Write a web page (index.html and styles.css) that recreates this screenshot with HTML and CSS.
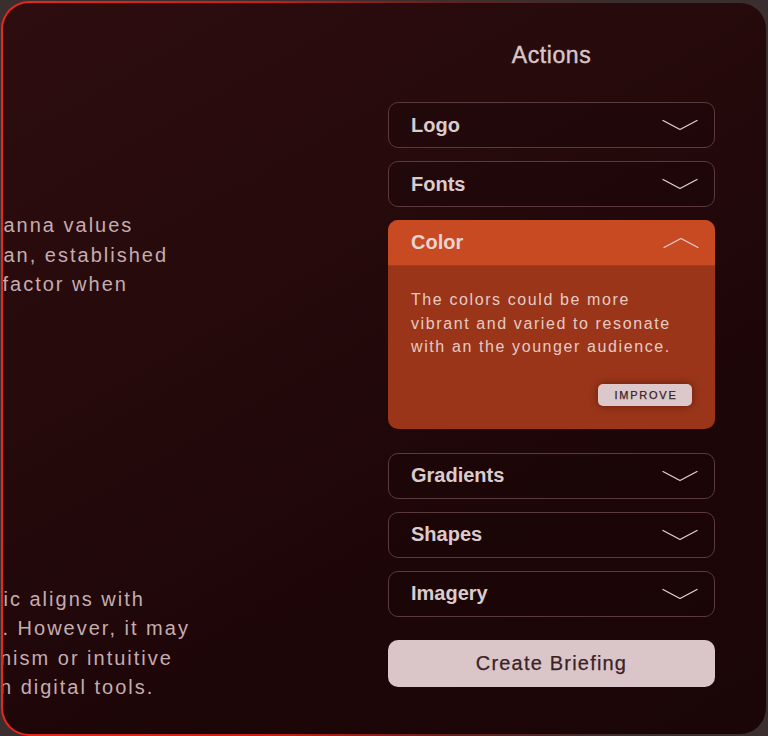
FILE: index.html
```html
<!DOCTYPE html>
<html lang="en">
<head>
<meta charset="utf-8">
<title>Actions</title>
<link rel="stylesheet" href="styles.css">
</head>
<body>
<div class="card">
  <section class="notes">
    <p class="para first">
      <span class="line">anna values</span>
      <span class="line">an, established</span>
      <span class="line nudge">factor when</span>
    </p>
    <p class="para second">
      <span class="line">ic aligns with</span>
      <span class="line nudge">. However, it may</span>
      <span class="line cut">nism or intuitive</span>
      <span class="line cut">n digital tools.</span>
    </p>
  </section>
  <aside class="actions">
    <h2 class="title">Actions</h2>
    <div class="list">
      <div class="item">
        <span class="label">Logo</span>
        <svg class="chev" viewBox="0 0 36 12" width="36" height="12"><polyline points="1,1.5 18,10.5 35,1.5"/></svg>
      </div>
      <div class="item">
        <span class="label">Fonts</span>
        <svg class="chev" viewBox="0 0 36 12" width="36" height="12"><polyline points="1,1.5 18,10.5 35,1.5"/></svg>
      </div>
      <div class="panel">
        <div class="panel-head">
          <span class="label">Color</span>
          <svg class="chev" viewBox="0 0 36 12" width="36" height="12"><polyline points="1,10.5 18,1.5 35,10.5"/></svg>
        </div>
        <div class="panel-body">
          <p class="desc">The colors could be more vibrant and varied to resonate with an the younger audience.</p>
          <button class="improve">IMPROVE</button>
        </div>
      </div>
      <div class="item after-panel">
        <span class="label">Gradients</span>
        <svg class="chev" viewBox="0 0 36 12" width="36" height="12"><polyline points="1,1.5 18,10.5 35,1.5"/></svg>
      </div>
      <div class="item">
        <span class="label">Shapes</span>
        <svg class="chev" viewBox="0 0 36 12" width="36" height="12"><polyline points="1,1.5 18,10.5 35,1.5"/></svg>
      </div>
      <div class="item">
        <span class="label">Imagery</span>
        <svg class="chev" viewBox="0 0 36 12" width="36" height="12"><polyline points="1,1.5 18,10.5 35,1.5"/></svg>
      </div>
      <button class="briefing">Create Briefing</button>
    </div>
  </aside>
</div>
</body>
</html>
```
FILE: styles.css
```css
* { box-sizing: border-box; }
html, body { margin: 0; padding: 0; }
body {
  width: 768px;
  height: 736px;
  background: #3a2e2e;
  font-family: "Liberation Sans", Arial, sans-serif;
  overflow: hidden;
}
.card {
  margin: 1px 0 0 1px;
  width: 767px;
  height: 735px;
  border: 2px solid transparent;
  border-radius: 28px;
  background:
    linear-gradient(150deg, #2e0d0f 0%, #260a0c 35%, #1d0608 70%, #1a0507 100%) padding-box,
    linear-gradient(to right, #e6291d 0%, #c81f15 35%, rgba(130, 22, 16, 0.6) 58%, rgba(30, 6, 8, 0) 82%) border-box;
  overflow: hidden;
  display: grid;
  grid-template-columns: 1fr 327px;
  column-gap: 20px;
  padding-right: 51px;
}
.notes {
  padding-top: 208px;
  color: #c5adb0;
  font-size: 20px;
  letter-spacing: 0.1em;
  line-height: 29.5px;
}
.para { margin: 0; }
.second { margin-top: 285px; }
.line { display: block; white-space: nowrap; margin-left: 0.5px; }
.line.nudge { margin-left: -0.5px; }
.line.cut { margin-left: -3px; }

.actions {
  padding-top: 38px;
  display: flex;
  flex-direction: column;
}
.title {
  margin: 0;
  text-align: center;
  font-size: 23px;
  line-height: 28px;
  font-weight: normal;
  letter-spacing: 0.6px;
  color: #d9c6c8;
  -webkit-text-stroke: 0.4px #d9c6c8;
}
.list {
  margin-top: 33px;
  display: flex;
  flex-direction: column;
  gap: 13px;
}
.item {
  height: 46px;
  border: 1px solid #5b3a3e;
  border-radius: 10px;
  display: flex;
  align-items: center;
  justify-content: space-between;
  padding: 0 16px 0 22px;
  background: rgba(20, 3, 5, 0.25);
}
.item.after-panel { margin-top: 11px; }
.label {
  font-size: 20px;
  font-weight: bold;
  color: #dccbcd;
}
.chev { display: block; }
.chev polyline {
  fill: none;
  stroke: #ddcdcf;
  stroke-width: 1.4;
  stroke-linecap: round;
  stroke-linejoin: round;
}
.panel {
  border-radius: 10px;
  overflow: hidden;
  background: #9a3519;
}
.panel-head {
  height: 46px;
  background: #c84a22;
  display: flex;
  align-items: center;
  justify-content: space-between;
  padding: 0 16px 0 23px;
  border-bottom: 1px solid #a83a1c;
}
.panel-head .label { color: #e9d4cf; }
.panel-body {
  padding: 22px 23px 23px 23px;
  display: flex;
  flex-direction: column;
}
.desc {
  margin: 0;
  font-size: 16px;
  line-height: 23.5px;
  letter-spacing: 0.1em;
  color: #e6cbc4;
}
.improve {
  align-self: flex-end;
  margin-top: 25px;
  width: 94px;
  height: 22px;
  border: 0;
  border-radius: 5px;
  background: #dcc8ca;
  color: #3a2226;
  font-family: "Liberation Sans", Arial, sans-serif;
  font-size: 11px;
  letter-spacing: 0.16em;
  padding: 0 0 0 2px;
  -webkit-text-stroke: 0.25px #3a2226;
  box-shadow: 0 0 8px rgba(40, 5, 5, 0.45);
}
.briefing {
  margin-top: 10px;
  height: 47px;
  border: 0;
  border-radius: 10px;
  background: #dac6c9;
  color: #3b2226;
  font-family: "Liberation Sans", Arial, sans-serif;
  font-size: 20px;
  letter-spacing: 1.2px;
  -webkit-text-stroke: 0.25px #3b2226;
}
```
